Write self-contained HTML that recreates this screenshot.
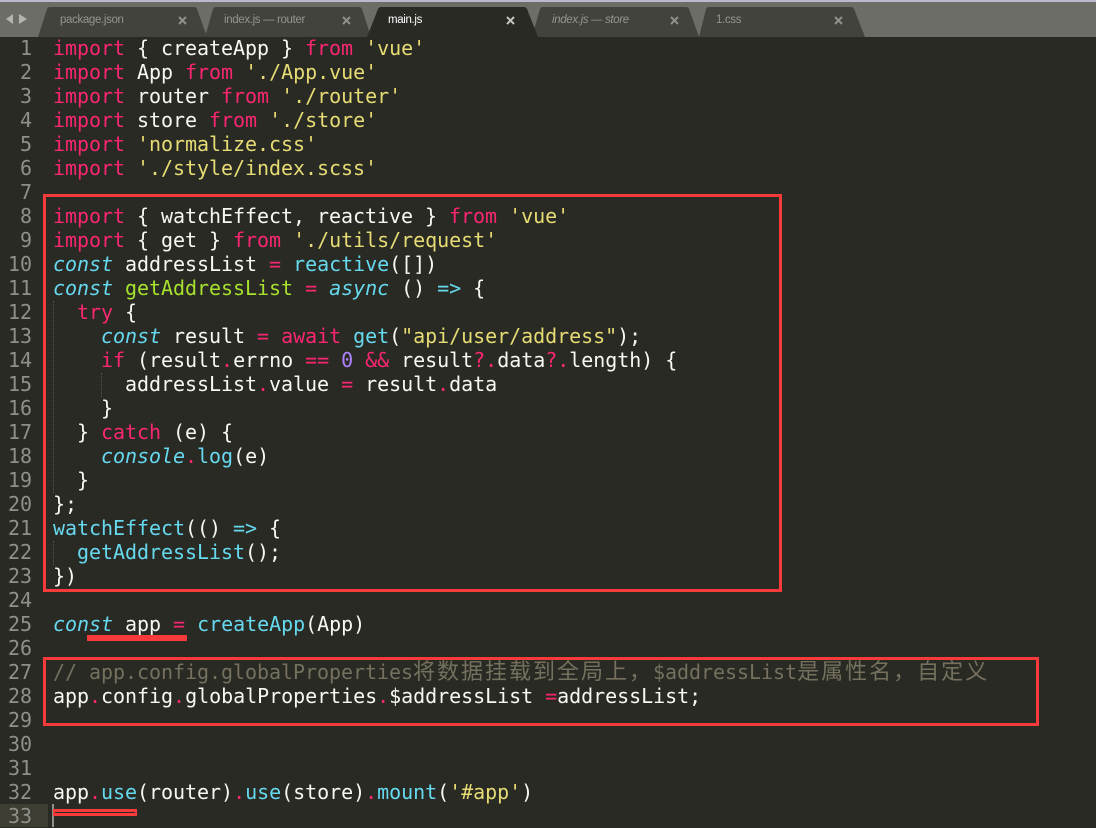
<!DOCTYPE html>
<html><head><meta charset="utf-8"><style>
*{box-sizing:border-box}
html,body{margin:0;padding:0;width:1096px;height:827px;overflow:hidden;background:#292a24}
#bar{position:absolute;left:0;top:0;width:1096px;height:37px;background:#6c6d67}
#stripe{position:absolute;left:0;top:0;width:1096px;height:2px;background:#b9bad0}
.tt{position:absolute;top:13px;font:11.5px/15px "Liberation Sans",sans-serif;color:#94958f;letter-spacing:-.35px;white-space:pre}
.l,.n{position:absolute;height:24px;font:20px/24px "DejaVu Sans Mono","Noto Sans CJK SC",monospace;letter-spacing:-.04px;white-space:pre;color:#f8f8f2}
.l{left:53px}
.n{left:0;width:32px;text-align:right;color:#8f908a}
.k{color:#f92672}.s{color:#e6db74}.c{color:#66d9ef}.i{color:#66d9ef;font-style:italic}.g{color:#a6e22e}.p{color:#ae81ff}.m{color:#75715e}
.z{font-family:"Noto Sans CJK SC",sans-serif;font-size:22px;letter-spacing:2px;line-height:0}
.r{position:absolute;border:3px solid #f83a3a}
.d{position:absolute;width:1px;border-left:1px dotted #55564f}
</style></head><body>
<div id="bar"></div><div id="stripe"></div>
<svg style="position:absolute;left:0;top:0" width="1096" height="38">
<polygon points="6,19 13,14 13,24" fill="#b4b5b0"/><polygon points="27,19 19,14 19,24" fill="#b4b5b0"/>
<path d="M38,37 L47,9 Q48,7 50,7 L194,7 Q196,7 197,9 L207,37Z" fill="#42433d"/>
<path d="M205,37 L213,9 Q214,7 216,7 L359,7 Q361,7 362,9 L371,37Z" fill="#42433d"/>
<path d="M532,37 L540,9 Q541,7 543,7 L686,7 Q688,7 689,9 L699,37Z" fill="#42433d"/>
<path d="M699,37 L706,9 Q707,7 709,7 L851,7 Q853,7 854,9 L865,37Z" fill="#42433d"/>
<path d="M367,37 L378,9 Q379,7 381,7 L524,7 Q526,7 527,9 L538,37Z" fill="#292a24"/>
<g stroke="#8f908a" stroke-width="2" fill="none">
<path d="M179,17 L186,24 M186,17 L179,24"/>
<path d="M343,17 L350,24 M350,17 L343,24"/>
<path d="M671,17 L678,24 M678,17 L671,24"/>
<path d="M835,17 L842,24 M842,17 L835,24"/>
<path d="M507,17 L514,24 M514,17 L507,24" stroke="#c4c4c0"/>
</g>
</svg>
<div class="tt" style="left:60px">package.json</div>
<div class="tt" style="left:224px">index.js — router</div>
<div class="tt" style="left:388px;color:#fff">main.js</div>
<div class="tt" style="left:552px;font-style:italic">index.js — store</div>
<div class="tt" style="left:716px">1.css</div>

<div style="position:absolute;left:0;top:804px;width:48px;height:23px;background:#3e3d32"></div>
<div style="position:absolute;left:52px;top:804px;width:2px;height:23px;background:#8f908a"></div>

<div class="d" style="left:53px;top:301px;height:192px"></div>
<div class="d" style="left:101px;top:373px;height:24px"></div>
<div class="d" style="left:53px;top:541px;height:24px"></div>

<div style="position:absolute;left:0;top:-1px;width:1096px;height:828px">
<div class="n" style="top:37px">1</div><div class="l" style="top:37px"><span class="k">import</span> { createApp } <span class="k">from</span> <span class="s">'vue'</span></div>
<div class="n" style="top:61px">2</div><div class="l" style="top:61px"><span class="k">import</span> App <span class="k">from</span> <span class="s">'./App.vue'</span></div>
<div class="n" style="top:85px">3</div><div class="l" style="top:85px"><span class="k">import</span> router <span class="k">from</span> <span class="s">'./router'</span></div>
<div class="n" style="top:109px">4</div><div class="l" style="top:109px"><span class="k">import</span> store <span class="k">from</span> <span class="s">'./store'</span></div>
<div class="n" style="top:133px">5</div><div class="l" style="top:133px"><span class="k">import</span> <span class="s">'normalize.css'</span></div>
<div class="n" style="top:157px">6</div><div class="l" style="top:157px"><span class="k">import</span> <span class="s">'./style/index.scss'</span></div>
<div class="n" style="top:181px">7</div>
<div class="n" style="top:205px">8</div><div class="l" style="top:205px"><span class="k">import</span> { watchEffect, reactive } <span class="k">from</span> <span class="s">'vue'</span></div>
<div class="n" style="top:229px">9</div><div class="l" style="top:229px"><span class="k">import</span> { get } <span class="k">from</span> <span class="s">'./utils/request'</span></div>
<div class="n" style="top:253px">10</div><div class="l" style="top:253px"><span class="i">const</span> addressList <span class="k">=</span> <span class="c">reactive</span>([])</div>
<div class="n" style="top:277px">11</div><div class="l" style="top:277px"><span class="i">const</span> <span class="g">getAddressList</span> <span class="k">=</span> <span class="i">async</span> () <span class="c">=&gt;</span> {</div>
<div class="n" style="top:301px">12</div><div class="l" style="top:301px">  <span class="k">try</span> {</div>
<div class="n" style="top:325px">13</div><div class="l" style="top:325px">    <span class="i">const</span> result <span class="k">=</span> <span class="k">await</span> <span class="c">get</span>(<span class="s">"api/user/address"</span>);</div>
<div class="n" style="top:349px">14</div><div class="l" style="top:349px">    <span class="k">if</span> (result<span class="k">.</span>errno <span class="k">==</span> <span class="p">0</span> <span class="k">&amp;&amp;</span> result<span class="k">?.</span>data<span class="k">?.</span>length) {</div>
<div class="n" style="top:373px">15</div><div class="l" style="top:373px">      addressList<span class="k">.</span>value <span class="k">=</span> result<span class="k">.</span>data</div>
<div class="n" style="top:397px">16</div><div class="l" style="top:397px">    }</div>
<div class="n" style="top:421px">17</div><div class="l" style="top:421px">  } <span class="k">catch</span> (e) {</div>
<div class="n" style="top:445px">18</div><div class="l" style="top:445px">    <span class="i">console</span><span class="k">.</span><span class="c">log</span>(e)</div>
<div class="n" style="top:469px">19</div><div class="l" style="top:469px">  }</div>
<div class="n" style="top:493px">20</div><div class="l" style="top:493px">};</div>
<div class="n" style="top:517px">21</div><div class="l" style="top:517px"><span class="c">watchEffect</span>(() <span class="c">=&gt;</span> {</div>
<div class="n" style="top:541px">22</div><div class="l" style="top:541px">  <span class="c">getAddressList</span>();</div>
<div class="n" style="top:565px">23</div><div class="l" style="top:565px">})</div>
<div class="n" style="top:589px">24</div>
<div class="n" style="top:613px">25</div><div class="l" style="top:613px"><span class="i">const</span> app <span class="k">=</span> <span class="c">createApp</span>(App)</div>
<div class="n" style="top:637px">26</div>
<div class="n" style="top:661px">27</div><div class="l m" style="top:661px">// app.config.globalProperties<span class="z">将数据挂载到全局上，</span>$addressList<span class="z">是属性名，自定义</span></div>
<div class="n" style="top:685px">28</div><div class="l" style="top:685px">app<span class="k">.</span>config<span class="k">.</span>globalProperties<span class="k">.</span>$addressList <span class="k">=</span>addressList;</div>
<div class="n" style="top:709px">29</div>
<div class="n" style="top:733px">30</div>
<div class="n" style="top:757px">31</div>
<div class="n" style="top:781px">32</div><div class="l" style="top:781px">app<span class="k">.</span><span class="c">use</span>(router)<span class="k">.</span><span class="c">use</span>(store)<span class="k">.</span><span class="c">mount</span>(<span class="s">'#app'</span>)</div>
<div class="n" style="top:805px">33</div>
</div>

<div class="r" style="left:43px;top:194px;width:739px;height:398px"></div>
<div class="r" style="left:43px;top:657px;width:996px;height:69px"></div>
<div style="position:absolute;left:87px;top:635px;width:100px;height:6px;background:#f83a3a"></div>
<div style="position:absolute;left:53px;top:809px;width:84px;height:7px;border:3px solid #f83a3a;border-width:3px 2px"></div>
</body></html>
